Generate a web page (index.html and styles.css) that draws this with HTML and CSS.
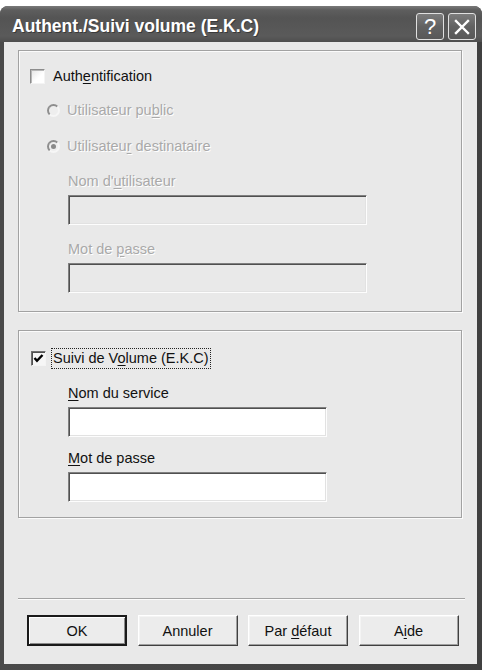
FILE: index.html
```html
<!DOCTYPE html>
<html lang="fr">
<head>
<meta charset="utf-8">
<title>Authent./Suivi volume (E.K.C)</title>
<link rel="stylesheet" href="styles.css">
</head>
<body>
<div class="window">
  <div class="titlebar">
    <span class="title">Authent./Suivi volume (E.K.C)</span>
    <div class="title-btns">
      <span class="tbtn help">?</span>
      <span class="tbtn close">
        <svg width="16" height="16" viewBox="0 0 16 16"><path d="M2 2 L14 14 M14 2 L2 14" stroke="#fff" stroke-width="2.4" stroke-linecap="square"/></svg>
      </span>
    </div>
  </div>
  <div class="client">
    <div class="group group-auth">
      <div class="row cb-row">
        <span class="checkbox"></span>
        <span class="label">Auth<u>e</u>ntification</span>
      </div>
      <div class="row radio-row first">
        <span class="radio"></span>
        <span class="label disabled">Utilisateur pu<u>b</u>lic</span>
      </div>
      <div class="row radio-row second">
        <span class="radio checked"></span>
        <span class="label disabled">Utilisateu<u>r</u> destinataire</span>
      </div>
      <div class="row field-label f1 disabled"><span>Nom d'<u>u</u>tilisateur</span></div>
      <div class="input wide disabled-input"></div>
      <div class="row field-label f2 disabled"><span>Mot de <u>p</u>asse</span></div>
      <div class="input wide disabled-input"></div>
    </div>

    <div class="group group-vol">
      <div class="row cb-row">
        <span class="checkbox checked">
          <svg width="11" height="11" viewBox="0 0 11 11"><path d="M1.5 5 L4 7.8 L9.5 2" fill="none" stroke="#000" stroke-width="2.4"/></svg>
        </span>
        <span class="label focus">Suivi de V<u>o</u>lume (E.K.C)</span>
      </div>
      <div class="row field-label g1"><span><u>N</u>om du service</span></div>
      <div class="input narrow"></div>
      <div class="row field-label g2"><span><u>M</u>ot de passe</span></div>
      <div class="input narrow"></div>
    </div>

    <div class="separator"></div>

    <div class="buttons">
      <span class="btn default"><span>OK</span></span>
      <span class="btn"><span>Annuler</span></span>
      <span class="btn"><span>Par <u>d</u>éfaut</span></span>
      <span class="btn"><span>A<u>i</u>de</span></span>
    </div>
  </div>
</div>
</body>
</html>
```

FILE: styles.css
```css
html, body {
  margin: 0;
  padding: 0;
  background: #ffffff;
}

body {
  padding-top: 6px;
  font-family: "Liberation Sans", Arial, sans-serif;
  font-size: 14.5px;
  color: #111;
}

u {
  text-decoration: underline;
  text-underline-offset: 2px;
}

.window {
  width: 482px;
  height: 664px;
  box-sizing: border-box;
  background: linear-gradient(90deg, #4a4a4a, #404040);
  border-radius: 8px 8px 0 0;
  padding: 0 5px 6px 4px;
  display: flex;
  flex-direction: column;
}

.titlebar {
  height: 36px;
  flex: none;
  display: flex;
  align-items: center;
  justify-content: space-between;
  margin: 0 -5px 0 -4px;
  padding: 0 6px 0 12px;
  background: linear-gradient(180deg, #7a7a7a 0px, #5e5e5e 4px, #545454 12px, #5a5a5a 30px, #4e4e4e 36px);
  border-radius: 8px 8px 0 0;
}

.title {
  font-family: "Liberation Sans", Arial, sans-serif;
  font-weight: bold;
  font-size: 17.5px;
  color: #fff;
  padding-top: 4px;
  text-shadow: 1px 1px 0 #3a3a3a;
}

.title-btns {
  display: flex;
  gap: 4px;
  padding-top: 5px;
}

.tbtn {
  width: 26px;
  height: 25px;
  border: 1px solid #e0e0e0;
  border-radius: 3px;
  background: linear-gradient(180deg, #7c7c7c, #626262 50%, #585858);
  display: flex;
  align-items: center;
  justify-content: center;
  color: #fff;
  font-size: 22px;
  line-height: 1;
}

.client {
  flex: 1;
  background: #e9e9e9;
  padding: 8px 15px 0 14px;
  display: flex;
  flex-direction: column;
}

.group {
  box-sizing: border-box;
  border: 1px solid #a2a2a2;
  box-shadow: 1px 1px 0 #fbfbfb, inset 1px 1px 0 #fbfbfb;
  display: flex;
  flex-direction: column;
  align-items: flex-start;
  padding-left: 11px;
}

.group-auth {
  height: 262px;
  padding-top: 15px;
}

.group-vol {
  height: 188px;
  margin-top: 18px;
  padding-top: 16px;
  padding-left: 12px;
}

.row {
  display: flex;
  align-items: center;
  height: 20px;
  line-height: 20px;
  white-space: nowrap;
}

.cb-row {
  gap: 8px;
}

.group-vol .cb-row {
  height: 22px;
  gap: 6px;
}

.checkbox {
  width: 15px;
  height: 15px;
  box-sizing: border-box;
  background: linear-gradient(135deg, #e4e4e4, #ffffff 60%);
  border: 1px solid;
  border-color: #8c8c8c #f4f4f4 #f4f4f4 #8c8c8c;
  box-shadow: inset 1px 1px 0 #b8b8b8;
  display: flex;
  align-items: center;
  justify-content: center;
}

.checkbox.checked {
  border-color: #707070 #f4f4f4 #f4f4f4 #707070;
  box-shadow: inset 1px 1px 0 #505050;
  background: #f6f6f6;
}

.label.focus {
  outline: 1px dotted #222;
  outline-offset: 0;
  line-height: 19px;
  padding: 0 1px;
}

.radio-row {
  gap: 7px;
  margin-left: 17px;
}

.radio-row.first { margin-top: 14px; }
.radio-row.second { margin-top: 16px; }

.radio {
  width: 13px;
  height: 13px;
  box-sizing: border-box;
  border-radius: 50%;
  border: 2px solid;
  border-color: #8e8e8e #f6f6f6 #f6f6f6 #8e8e8e;
  background: #eeeeee;
  display: flex;
  align-items: center;
  justify-content: center;
}

.radio.checked::after {
  content: "";
  width: 5px;
  height: 5px;
  border-radius: 50%;
  background: #8a8a8a;
}

.disabled {
  color: #a9a9a9;
  text-shadow: 1px 1px 0 #ffffff;
}

.field-label {
  margin-left: 38px;
}

.f1 { margin-top: 15px; }
.f2 { margin-top: 14px; }
.g1 { margin-top: 14px; margin-left: 37px; }
.g2 { margin-top: 11px; margin-left: 37px; }

.input {
  box-sizing: border-box;
  height: 30px;
  margin-top: 4px;
  margin-left: 38px;
  border: 1px solid;
  border-color: #808080 #fdfdfd #fdfdfd #808080;
  box-shadow: inset 1px 1px 0 #505050, inset -1px -1px 0 #e2e2e2;
  background: #ffffff;
}

.input.wide { width: 299px; }
.input.narrow { width: 259px; margin-left: 37px; }

.disabled-input {
  background: #e9e9e9;
}

.separator {
  margin-top: 80px;
  margin-right: -3px;
  height: 1px;
  background: #a2a2a2;
  border-bottom: 1px solid #fbfbfb;
}

.buttons {
  display: flex;
  gap: 10.5px;
  margin-top: 15px;
  padding-left: 9px;
}

.btn {
  box-sizing: border-box;
  width: 100px;
  height: 31px;
  display: flex;
  align-items: center;
  justify-content: center;
  background: #ececec;
  border: 1px solid;
  border-color: #ffffff #404040 #404040 #ffffff;
  box-shadow: inset -1px -1px 0 #a0a0a0, inset 1px 1px 0 #f4f4f4;
  color: #111;
  white-space: nowrap;
}

.btn.default {
  border: 2px solid #1a1a1a;
  box-shadow: inset 1px 1px 0 #ffffff, inset -1px -1px 0 #8a8a8a;
}
```
